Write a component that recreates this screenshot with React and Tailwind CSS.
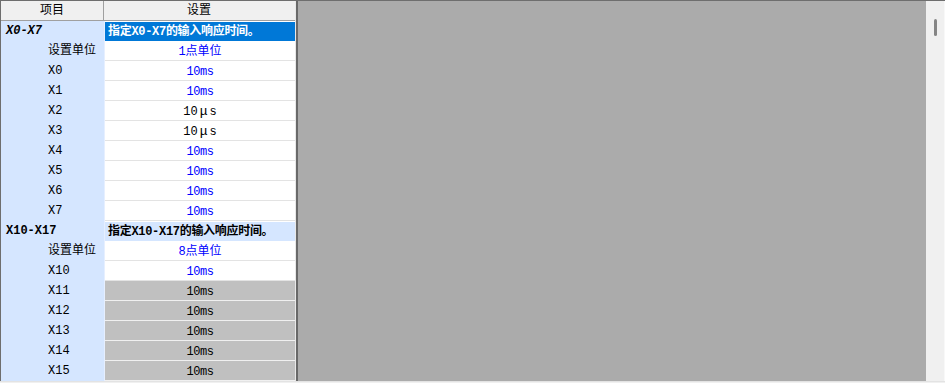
import React from 'react';

// Input response time settings grid
const groups = [
  {
    name: 'X0-X7',
    italic: true,
    selected: true,
    desc: '指定X0-X7的输入响应时间。',
    unit: '1点单位',
    rows: [
      ['X0', '10ms', 'blue'],
      ['X1', '10ms', 'blue'],
      ['X2', '10μs', 'black'],
      ['X3', '10μs', 'black'],
      ['X4', '10ms', 'blue'],
      ['X5', '10ms', 'blue'],
      ['X6', '10ms', 'blue'],
      ['X7', '10ms', 'blue'],
    ],
  },
  {
    name: 'X10-X17',
    italic: false,
    selected: false,
    desc: '指定X10-X17的输入响应时间。',
    unit: '8点单位',
    rows: [
      ['X10', '10ms', 'blue'],
      ['X11', '10ms', 'gray'],
      ['X12', '10ms', 'gray'],
      ['X13', '10ms', 'gray'],
      ['X14', '10ms', 'gray'],
      ['X15', '10ms', 'gray'],
    ],
  },
];

const cellStyles = {
  blue: 'bg-white text-[#0000ff] border-[#e3e3e3]',
  black: 'bg-white text-black border-[#e3e3e3]',
  gray: 'bg-[#c0c0c0] text-black border-[#f0f0f0]',
};

const Value = ({ text }) => {
  if (text.includes('μ')) {
    const [a, b] = text.split('μ');
    // the μ is drawn full width in the original font
    return (
      <span className="flex items-center">
        {a}
        <span className="px-[2px] text-[13px]">μ</span>
        {b}
      </span>
    );
  }
  return <span className="tracking-[-0.5px]">{text}</span>;
};

const Row = ({ label, children, rightClass }) => (
  <div className="flex h-[20px]">
    <div className="w-[103px] bg-[#d5e6ff] flex items-center pl-[47px] text-black">{label}</div>
    <div className="w-[1px] bg-[#e6efff]" />
    <div className={`w-[190px] flex items-center justify-center pt-[2px] border-b ${rightClass}`}>{children}</div>
  </div>
);

export default function App() {
  return (
    <div
      className="w-[945px] h-[383px] flex flex-col bg-[#f0f0f0] overflow-hidden text-[12px] leading-none"
      style={{ fontFamily: '"Liberation Mono", "Noto Sans CJK SC", monospace' }}
    >
      <div className="h-[1px] bg-[#6e6e6e]" />
      <div className="flex h-[380px]">
        <div className="w-[1px] bg-[#6e6e6e]" />

        {/* grid */}
        <div className="w-[294px] flex flex-col">
          <div className="flex h-[20px] bg-[#f0f0f0] border-b border-[#a0a0a0]">
            <div className="w-[103px] flex items-center justify-center border-r border-[#a0a0a0]">项目</div>
            <div className="w-[190px] flex items-center justify-center">设置</div>
          </div>

          {groups.map((g) => (
            <React.Fragment key={g.name}>
              <div className="flex h-[20px]">
                <div className={`w-[103px] bg-[#d5e6ff] flex items-center pl-[5px] font-bold ${g.italic ? 'italic' : ''}`}>
                  {g.name}
                </div>
                <div className="w-[1px] bg-[#e6efff]" />
                <div className="w-[190px] pt-[1px] bg-white">
                  <div
                    className={`h-full flex items-center pl-[3px] font-bold tracking-[-0.3px] ${
                      g.selected ? 'bg-[#0078d7] text-white' : 'bg-[#d5e6ff] text-black'
                    }`}
                  >
                    {g.desc}
                  </div>
                </div>
              </div>
              <Row label="设置单位" rightClass={cellStyles.blue}>
                {g.unit}
              </Row>
              {g.rows.map(([label, val, kind]) => (
                <Row key={label} label={label} rightClass={cellStyles[kind]}>
                  <Value text={val} />
                </Row>
              ))}
            </React.Fragment>
          ))}
        </div>

        <div className="w-[1px] bg-[#e8e8e8]" />
        <div className="w-[2px] bg-[#696969]" />

        {/* empty area */}
        <div className="flex-1 bg-[#ababab]" />

        {/* scrollbar */}
        <div className="w-[19px] bg-[#f0f0f0] border-r border-[#f8f8f8] relative">
          <div className="absolute left-[8px] top-[18px] w-[3px] h-[17px] rounded-full bg-[#858585]" />
        </div>
      </div>
      <div className="flex-1 bg-[#f0f0f0] border-t border-[#e3e3e3]" />
    </div>
  );
}
